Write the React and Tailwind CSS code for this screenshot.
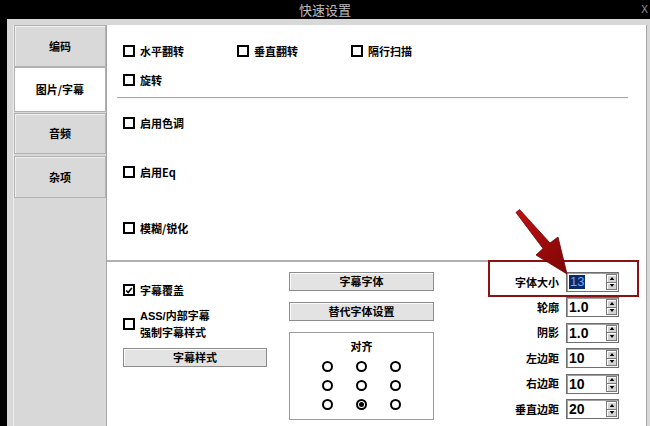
import React from "react";

const font = { fontFamily: '"Noto Sans CJK SC", "Noto Sans", sans-serif' };

function Box({ checked }) {
  return (
    <span className="flex h-[12px] w-[12px] shrink-0 items-center justify-center border-2 border-black bg-white">
      {checked ? (
        <svg viewBox="0 0 10 10" className="h-[9px] w-[9px]">
          <path d="M1.5 5 L4 7.5 L8.5 2" fill="none" stroke="#000" strokeWidth="2" />
        </svg>
      ) : null}
    </span>
  );
}

function Check({ label, checked, className = "" }) {
  return (
    <div className={`flex h-[20px] items-center gap-[5px] ${className}`}>
      <Box checked={checked} />
      <span className="text-[11px] font-bold leading-none text-black">{label}</span>
    </div>
  );
}

function Btn({ children, className = "" }) {
  return (
    <div
      className={`flex h-[19px] items-center justify-center border border-[#8c8c8c] bg-[#e3e3e3] text-[11px] font-bold text-black shadow-[inset_1px_1px_0_#fbfbfb] ${className}`}
    >
      {children}
    </div>
  );
}

function Radio({ on }) {
  return (
    <span className="flex h-[11px] w-[11px] items-center justify-center rounded-full border-2 border-black bg-white">
      {on ? <span className="h-[5px] w-[5px] rounded-full bg-black" /> : null}
    </span>
  );
}

function Spin({ value, selected }) {
  return (
    <div className="flex h-[20px] w-[53px] border border-[#6e6e6e] bg-white shadow-[inset_1px_1px_0_#a0a0a0]">
      <div className="flex flex-1 items-center pl-[2px]">
        {selected ? (
          <span
            className="bg-[#0b2a6e] px-[1px] text-[13px] leading-[14px] text-[#7fa6e6]"
            style={{ fontFamily: '"Liberation Sans", sans-serif' }}
          >
            {value}
          </span>
        ) : (
          <span
            className="text-[14px] font-bold leading-none text-black"
            style={{ fontFamily: '"Liberation Sans", sans-serif' }}
          >
            {value}
          </span>
        )}
      </div>
      <div className="my-[1px] mr-[1px] flex w-[11px] flex-col">
        <div className="flex flex-1 items-center justify-center border border-[#7a7a7a] bg-[#d4d4d4] shadow-[inset_1px_1px_0_#fff]">
          <svg viewBox="0 0 6 4" className="h-[3px] w-[6px]">
            <path d="M0 4 L3 0 L6 4 Z" fill="#000" />
          </svg>
        </div>
        <div className="flex flex-1 items-center justify-center border border-t-0 border-[#7a7a7a] bg-[#d4d4d4] shadow-[inset_1px_1px_0_#fff]">
          <svg viewBox="0 0 6 4" className="h-[3px] w-[6px]">
            <path d="M0 0 L3 4 L6 0 Z" fill="#000" />
          </svg>
        </div>
      </div>
    </div>
  );
}

function SpinRow({ label, value, selected }) {
  return (
    <div className="flex h-[20px] items-center justify-end gap-[7px] pr-[20px]">
      <span className="text-[11px] font-bold leading-none text-black">{label}</span>
      <Spin value={value} selected={selected} />
    </div>
  );
}

const tabs = [
  { label: "编码", h: "h-[42px]", active: false },
  { label: "图片/字幕", h: "h-[45px]", active: true },
  { label: "音频", h: "h-[41px] mt-[1px]", active: false },
  { label: "杂项", h: "h-[42px] mt-[2px]", active: false },
];

export default function App() {
  return (
    <div className="relative flex h-[426px] w-[650px] flex-col overflow-hidden bg-black" style={font}>
      <div className="relative flex h-[19px] items-center justify-center text-[13px] text-[#bdbdbd]">
        快速设置
        <span className="absolute right-[2px] top-[2px] text-[10px] text-[#9a9a9a]" style={{ fontFamily: '"Liberation Sans", sans-serif' }}>
          X
        </span>
      </div>

      <div className="ml-[7px] flex flex-1 bg-[#d8d8d8] pt-[6px]">
        <div className="ml-[6px] flex w-[93px] flex-col border-l border-[#ececec]">
          {tabs.map((t) => (
            <div
              key={t.label}
              className={`flex ${t.h} items-center justify-center border border-[#b2b2b2] text-[11px] font-bold text-black ${
                t.active ? "bg-white" : "bg-[#d9d9d9] shadow-[inset_1px_1px_0_#f0f0f0]"
              }`}
            >
              {t.label}
            </div>
          ))}
        </div>

        <div className="mr-[3px] flex flex-1 flex-col border-l border-r border-[#a5a5a5] bg-white">
          <div className="ml-[16px] mt-[16px] flex">
            <Check label="水平翻转" className="w-[114px]" />
            <Check label="垂直翻转" className="w-[114px]" />
            <Check label="隔行扫描" />
          </div>
          <Check label="旋转" className="ml-[16px] mt-[9px]" />
          <div className="ml-[10px] mt-[7px] h-[2px] w-[511px] border-t border-b border-t-[#a8a8a8] border-b-[#f4f4f4]" />

          <Check label="启用色调" className="ml-[16px] mt-[14px]" />
          <Check label="启用Eq" className="ml-[16px] mt-[29px]" />
          <Check label="模糊/锐化" className="ml-[16px] mt-[36px]" />

          <div className="mt-[22px] flex">
            <div className="flex w-[381px] border-t-2 border-t-[#b0b0b0]">
              <div className="ml-[16px] flex w-[144px] flex-col">
                <Check label="字幕覆盖" checked className="mt-[18px]" />
                <div className="mt-[8px] flex h-[31px] items-center gap-[5px]">
                  <Box />
                  <div className="flex flex-col text-[11px] font-bold leading-[16px] text-black">
                    <span style={{ fontFamily: '"Liberation Sans", "Noto Sans CJK SC", sans-serif' }}>
                      ASS/<span style={font}>内部字幕</span>
                    </span>
                    <span>强制字幕样式</span>
                  </div>
                </div>
                <Btn className="mt-[9px]">字幕样式</Btn>
              </div>

              <div className="ml-[22px] flex w-[145px] flex-col">
                <Btn className="mt-[10px]">字幕字体</Btn>
                <Btn className="mt-[11px]">替代字体设置</Btn>
                <div className="mt-[11px] flex h-[88px] flex-col items-center border border-[#9c9c9c] shadow-[inset_1px_1px_0_#fff]">
                  <span className="mt-[5px] text-[11px] font-bold leading-[16px] text-black">对齐</span>
                  <div className="mt-[6px] grid grid-cols-[34px_34px_34px] gap-y-[7px]">
                    {[0, 1, 2, 3, 4, 5, 6, 7, 8].map((i) => (
                      <div key={i} className="flex h-[12px] items-center justify-center">
                        <Radio on={i === 7} />
                      </div>
                    ))}
                  </div>
                </div>
              </div>
            </div>

            <div className="flex w-[151px] flex-col">
              <div className="h-[37px] border-2 border-[#8a1212] pt-[10px]">
                <div className="flex items-center justify-end gap-[7px] pr-[18px]">
                  <span className="text-[11px] font-bold leading-none text-black">字体大小</span>
                  <Spin value="13" selected />
                </div>
              </div>
              <div className="flex flex-col gap-[5.5px]">
                <SpinRow label="轮廓" value="1.0" />
                <SpinRow label="阴影" value="1.0" />
                <SpinRow label="左边距" value="10" />
                <SpinRow label="右边距" value="10" />
                <SpinRow label="垂直边距" value="20" />
              </div>
            </div>
          </div>
        </div>
      </div>

      <svg className="pointer-events-none absolute left-0 top-0" width="650" height="426" viewBox="0 0 650 426">
        <defs>
          <linearGradient id="ar" x1="0" y1="0" x2="1" y2="1">
            <stop offset="0" stopColor="#c41010" />
            <stop offset="1" stopColor="#7a0606" />
          </linearGradient>
        </defs>
        <polygon
          points="519.5,209.5 550,243 558,237 567,274 536,255 543,248.5 516,212.5"
          fill="url(#ar)"
          stroke="#6a0404"
          strokeWidth="0.8"
          strokeLinejoin="round"
        />
      </svg>
    </div>
  );
}
